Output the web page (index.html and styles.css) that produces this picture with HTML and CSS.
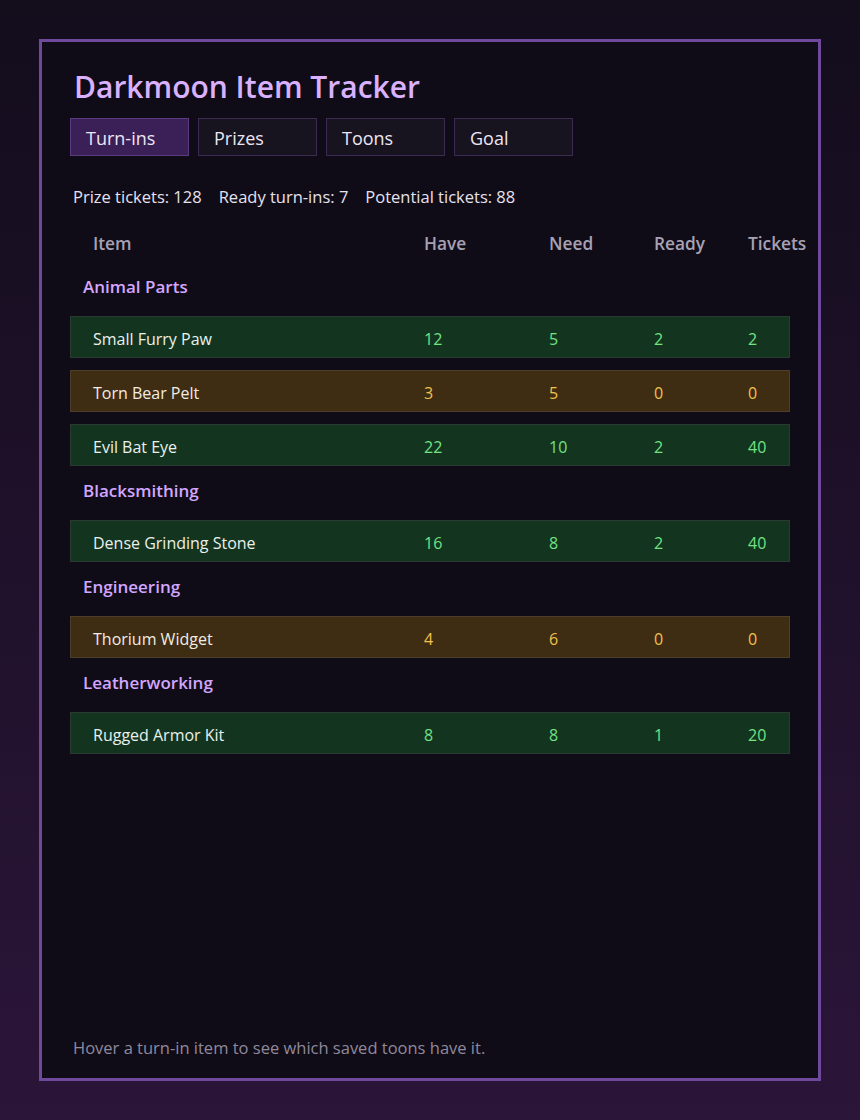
FILE: index.html
```html
<!DOCTYPE html>
<html>
<head>
    <link rel="stylesheet" href="styles.css">
</head>
<body>
    <div class="panel">
        <h1 class="title">Darkmoon Item Tracker</h1>

        <div class="tabs">
            <button class="tab active">Turn-ins</button>
            <button class="tab">Prizes</button>
            <button class="tab">Toons</button>
            <button class="tab">Goal</button>
        </div>

        <div class="stats">
            <span>Prize tickets: 128</span>
            <span>Ready turn-ins: 7</span>
            <span>Potential tickets: 88</span>
        </div>

        <div class="grid head">
            <div>Item</div>
            <div>Have</div>
            <div>Need</div>
            <div>Ready</div>
            <div>Tickets</div>
        </div>

        <div class="category">Animal Parts</div>
        <div class="grid row ok">
            <div class="name">Small Furry Paw</div>
            <div>12</div><div>5</div><div>2</div><div>2</div>
        </div>
        <div class="grid row short">
            <div class="name">Torn Bear Pelt</div>
            <div>3</div><div>5</div><div>0</div><div>0</div>
        </div>
        <div class="grid row ok">
            <div class="name">Evil Bat Eye</div>
            <div>22</div><div>10</div><div>2</div><div>40</div>
        </div>

        <div class="category">Blacksmithing</div>
        <div class="grid row ok">
            <div class="name">Dense Grinding Stone</div>
            <div>16</div><div>8</div><div>2</div><div>40</div>
        </div>

        <div class="category">Engineering</div>
        <div class="grid row short">
            <div class="name">Thorium Widget</div>
            <div>4</div><div>6</div><div>0</div><div>0</div>
        </div>

        <div class="category">Leatherworking</div>
        <div class="grid row ok">
            <div class="name">Rugged Armor Kit</div>
            <div>8</div><div>8</div><div>1</div><div>20</div>
        </div>

        <p class="hint">Hover a turn-in item to see which saved toons have it.</p>
    </div>
</body>
</html>
```
FILE: styles.css
```css
/* Darkmoon tracker */
* {
    box-sizing: border-box;
}

html, body {
    margin: 0;
    min-height: 100%;
}

body {
    font-family: "Open Sans", "Noto Sans", sans-serif;
    background: linear-gradient(#130d1c, #2b1539);
    padding: 39px;
    min-height: 100vh;
    color: #e6e1ee;
}

.panel {
    display: flex;
    flex-direction: column;
    min-height: 1042px;
    background-color: #0f0c17;
    border: 3px solid #6f4a9c;
    padding: 25px 28px 19px 28px;
}

.title {
    margin: 0 0 11px 4px;
    font-size: 30px;
    line-height: 40px;
    font-weight: 600;
    color: #d9b1ff;
}

.tabs {
    display: flex;
    gap: 9px;
}

.tab {
    width: 119px;
    height: 38px;
    padding: 2px 0 0 15px;
    text-align: left;
    font-family: inherit;
    font-size: 18px;
    color: #ece6f4;
    background-color: #17131f;
    border: 1px solid #3d2c52;
}

.tab.active {
    background-color: #3b1f57;
    border-color: #5b3a80;
}

.stats {
    display: flex;
    gap: 17px;
    margin: 30px 0 0 3px;
    font-size: 16.5px;
    line-height: 22px;
}

.grid {
    display: grid;
    grid-template-columns: 331px 125px 105px 94px 41px;
    align-items: center;
    white-space: nowrap;
}

.head {
    margin-top: 19px;
    height: 32px;
    padding-left: 23px;
    font-size: 17.3px;
    font-weight: 600;
    color: #a8a1b4;
}

.category {
    margin-top: 15px;
    height: 30px;
    line-height: 26px;
    padding-left: 13px;
    font-size: 17px;
    font-weight: 600;
    color: #d3a6ff;
}

.category + .row {
    margin-top: 12px;
}

.row {
    height: 42px;
    padding: 3px 0 0 22px;
    margin-top: 12px;
    width: 720px;
    font-size: 16px;
}

.category ~ .category {
    margin-top: 12px;
}

.row .name {
    color: #eaf0ec;
}

.ok {
    background-color: #13351f;
    border: 1px solid #2a3b33;
    color: #72e283;
}

.short {
    background-color: #3e2d12;
    border: 1px solid #4d3d2b;
    color: #f2c04e;
}

.short .name {
    color: #f2ece2;
}

.hint {
    margin: auto 0 0 3px;
    font-size: 16.5px;
    line-height: 22px;
    color: #8f899b;
}
```
